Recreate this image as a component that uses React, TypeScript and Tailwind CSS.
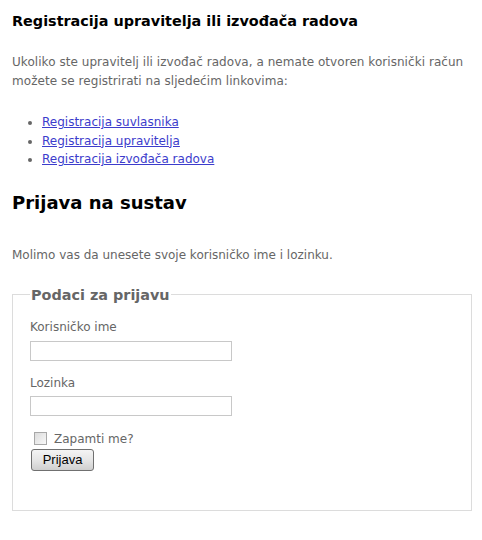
import React from "react";

export default function App() {
  return (
    <div className="w-[482px] h-[540px] bg-white text-[#666666]" style={{ fontFamily: '"DejaVu Sans", Verdana, sans-serif' }}>
      <div className="pl-[12px] pr-[10px] pt-[11px]">
        <h1 className="text-[14.4px] font-bold text-black leading-[20px]">Registracija upravitelja ili izvođača radova</h1>
        <p className="mt-[22px] text-[12px] leading-[19px] tracking-[0.05px]">
          Ukoliko ste upravitelj ili izvođač radova, a nemate otvoren korisnički račun možete se registrirati na sljedećim linkovima:
        </p>
        <ul className="mt-[22px] pl-[30px] text-[12px] leading-[18.5px] list-disc marker:text-[#666666]">
          <li><a href="#" className="text-[#3c3ccc] underline">Registracija suvlasnika</a></li>
          <li><a href="#" className="text-[#3c3ccc] underline">Registracija upravitelja</a></li>
          <li><a href="#" className="text-[#3c3ccc] underline">Registracija izvođača radova</a></li>
        </ul>
        <h2 className="mt-[22px] text-[18px] font-bold text-black leading-[24px]">Prijava na sustav</h2>
        <p className="mt-[31px] text-[12px] leading-[19px]">Molimo vas da unesete svoje korisničko ime i lozinku.</p>
        <fieldset className="mt-[21px] w-[460px] h-[225px] border border-[#dcdcdc] pl-[17px] pr-[10px] pt-0 m-0">
          <legend className="px-[1px] text-[14.4px] font-bold text-[#666666] leading-[18px]">Podaci za prijavu</legend>
          <div className="mt-[14px] text-[12px] leading-[18px]">Korisničko ime</div>
          <input type="text" className="mt-[5px] block w-[202px] h-[20px] border border-[#c8c8c8] bg-white outline-none" />
          <div className="mt-[13px] text-[12px] leading-[18px]">Lozinka</div>
          <input type="password" className="mt-[4px] block w-[202px] h-[20px] border border-[#c8c8c8] bg-white outline-none" />
          <div className="mt-[15px] flex items-center h-[16px]">
            <span className="ml-[4px] w-[13px] h-[13px] border border-[#a8a8a8] bg-gradient-to-br from-[#dcdcdc] to-[#f8f8f8]"></span>
            <span className="ml-[7px] text-[12px] leading-[16px]">Zapamti me?</span>
          </div>
          <button
            type="button"
            className="mt-[1px] ml-[1px] w-[63px] h-[22px] border border-[#707070] rounded-[3px] bg-gradient-to-b from-[#f4f4f4] via-[#e6e6e6] to-[#cfcfcf] text-black text-[13px] leading-[18px]"
            style={{ fontFamily: '"Liberation Sans", Arial, sans-serif' }}
          >
            Prijava
          </button>
        </fieldset>
      </div>
    </div>
  );
}
